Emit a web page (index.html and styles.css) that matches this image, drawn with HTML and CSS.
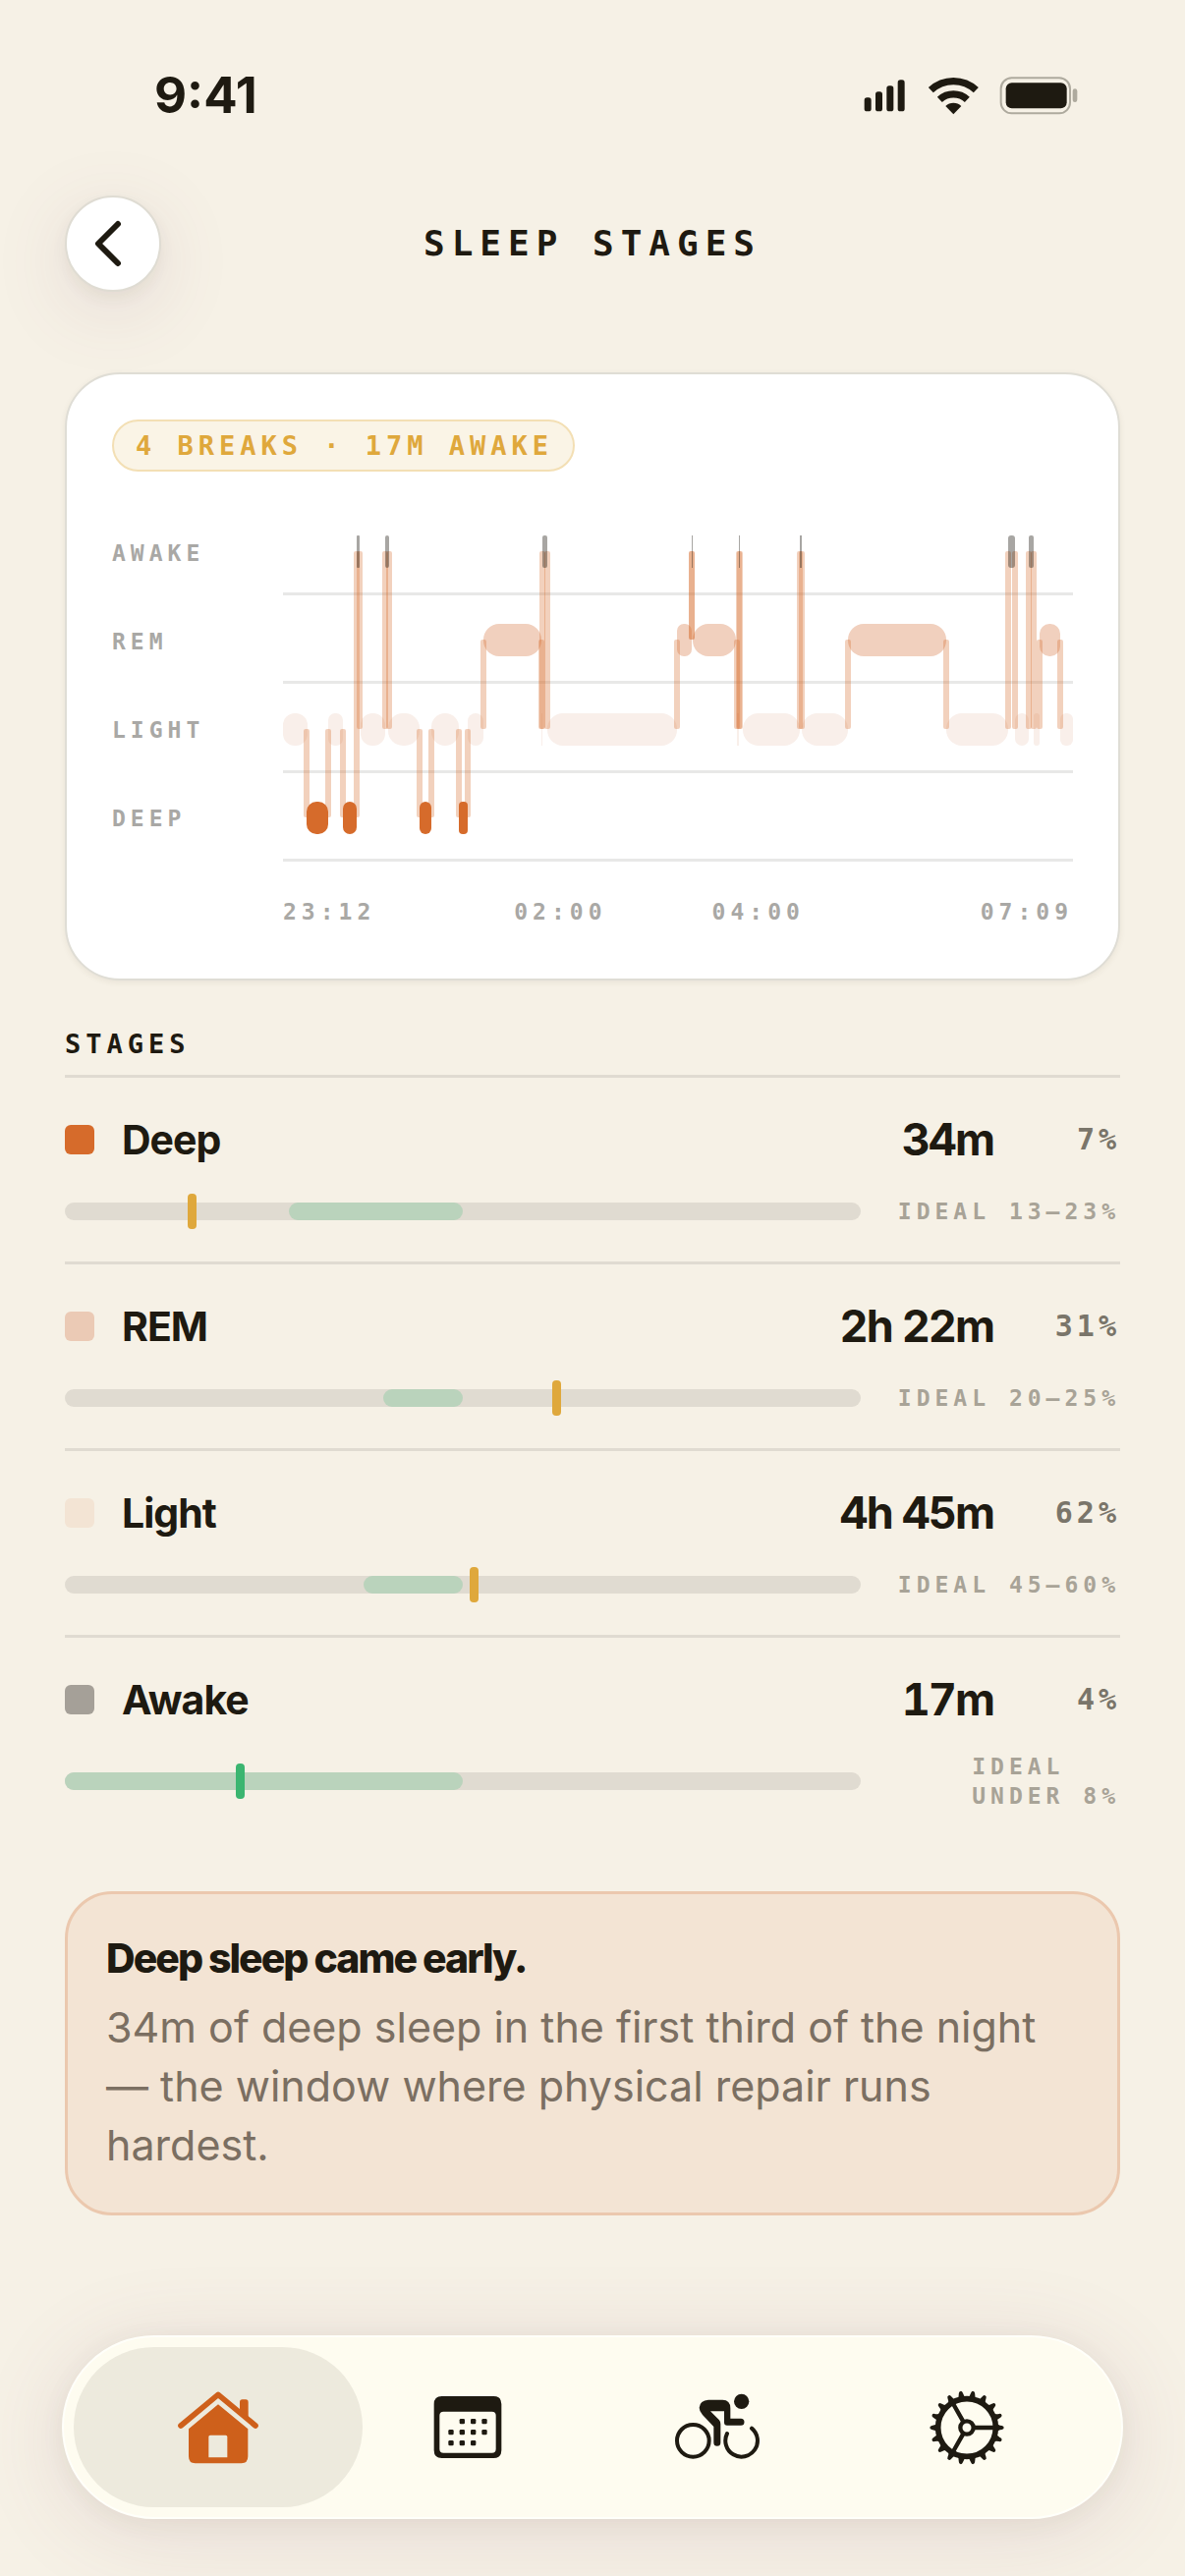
FILE: index.html
```html
<!DOCTYPE html>
<html lang="en">
<head>
<meta charset="utf-8">
<meta name="viewport" content="width=device-width, initial-scale=1">
<title>Sleep Stages</title>
<link rel="stylesheet" href="styles.css">
</head>
<body>
<div class="screen">
  <div class="status">
    <span class="status-time">9:41</span>
    <span class="status-icons">
      <svg width="44" height="40" viewBox="58 50 132 120" aria-hidden="true"><rect x="60" y="117" width="21" height="42" rx="8"/><rect x="94" y="99" width="21" height="60" rx="8"/><rect x="128" y="81" width="21" height="78" rx="8"/><rect x="162" y="63" width="21" height="96" rx="8"/></svg>
      <svg width="54" height="40" viewBox="250 50 162 120" aria-hidden="true"><path class="wave" d="M263 94A101 101 0 0 1 401 94M290 123A62 62 0 0 1 374 123"/><path d="M332 168l-24-25a35 35 0 0 1 48 0z"/></svg>
      <svg width="80" height="40" viewBox="472 50 240 120" aria-hidden="true"><rect class="shell" x="477" y="57" width="211" height="108" rx="33"/><rect x="492" y="72" width="186" height="78" rx="18"/><path class="cap" d="M696 97q0-7 7-7 7 0 7 9v23q0 9-7 9-7 0-7-7z"/></svg>
    </span>
  </div>

  <header class="header">
    <button class="back" type="button" aria-label="Back">
      <svg width="42" height="54" viewBox="0 0 42 54" aria-hidden="true"><path d="M29 7L9 27l20 20"/></svg>
    </button>
    <h1 class="title">SLEEP STAGES</h1>
  </header>

  <main class="content">
    <section class="card">
      <span class="badge">4 BREAKS · 17M AWAKE</span>
      <div class="chart">
        <div class="levels"><span>AWAKE</span><span>REM</span><span>LIGHT</span><span>DEEP</span></div>
        <svg class="plot" viewBox="0 0 804 364" preserveAspectRatio="none" role="img" aria-label="Sleep stages through the night">
          <g class="grid"><rect y="89" width="804" height="3"/><rect y="179" width="804" height="3"/><rect y="270" width="804" height="3"/><rect y="360" width="804" height="3"/></g>
          <g class="light">
            <rect x="0" y="212" width="25" height="33" rx="12"/><rect x="46" y="212" width="15" height="33" rx="7"/><rect x="79" y="212" width="25" height="33" rx="12"/><rect x="107" y="212" width="32" height="33" rx="15"/><rect x="151" y="212" width="28" height="33" rx="14"/><rect x="188" y="212" width="16" height="33" rx="8"/><rect x="269" y="212" width="132" height="33" rx="16"/><rect x="468" y="212" width="58" height="33" rx="16"/><rect x="528" y="212" width="47" height="33" rx="16"/><rect x="675" y="212" width="63" height="33" rx="16"/><rect x="745" y="212" width="14" height="33" rx="7"/><rect x="764" y="212" width="6" height="33" rx="3"/><rect x="791" y="212" width="13" height="33" rx="6"/><rect x="263" y="212" width="1" height="33"/><rect x="462" y="212" width="2" height="33"/>
          </g>
          <g class="rem">
            <rect x="204" y="121" width="59" height="33" rx="16"/><rect x="401" y="121" width="15" height="33" rx="7"/><rect x="417" y="121" width="44" height="33" rx="16"/><rect x="575" y="121" width="100" height="33" rx="16"/><rect x="770" y="121" width="21" height="33" rx="10"/>
          </g>
          <g class="link">
            <rect x="21" y="228" width="6" height="90" rx="2"/><rect x="43" y="228" width="6" height="90" rx="2"/><rect x="58" y="228" width="6" height="90" rx="2"/><rect x="72" y="47" width="6" height="271" rx="2"/><rect x="75" y="47" width="6" height="181" rx="2"/><rect x="101" y="47" width="6" height="181" rx="2"/><rect x="105" y="47" width="6" height="181" rx="2"/><rect x="136" y="228" width="6" height="90" rx="2"/><rect x="148" y="228" width="6" height="90" rx="2"/><rect x="176" y="228" width="6" height="90" rx="2"/><rect x="185" y="228" width="6" height="90" rx="2"/><rect x="201" y="137" width="6" height="91" rx="2"/><rect x="260" y="137" width="6" height="91" rx="2"/><rect x="261" y="47" width="6" height="181" rx="2"/><rect x="266" y="47" width="6" height="181" rx="2"/><rect x="398" y="137" width="6" height="91" rx="2"/><rect x="413" y="47" width="6" height="90" rx="2"/><rect x="413" y="47" width="6" height="90" rx="2"/><rect x="459" y="137" width="6" height="91" rx="2"/><rect x="461" y="47" width="6" height="181" rx="2"/><rect x="462" y="47" width="6" height="181" rx="2"/><rect x="523" y="47" width="6" height="181" rx="2"/><rect x="525" y="47" width="6" height="181" rx="2"/><rect x="572" y="137" width="6" height="91" rx="2"/><rect x="672" y="137" width="6" height="91" rx="2"/><rect x="735" y="47" width="6" height="181" rx="2"/><rect x="742" y="47" width="6" height="181" rx="2"/><rect x="756" y="47" width="6" height="181" rx="2"/><rect x="761" y="47" width="6" height="181" rx="2"/><rect x="767" y="137" width="6" height="91" rx="2"/><rect x="788" y="137" width="6" height="91" rx="2"/>
          </g>
          <g class="awake">
            <rect x="75" y="31" width="3" height="33" rx="1"/><rect x="104" y="31" width="4" height="33" rx="2"/><rect x="264" y="31" width="5" height="33" rx="2"/><rect x="416" y="31" width="1" height="33"/><rect x="464" y="31" width="1" height="33"/><rect x="526" y="31" width="2" height="33"/><rect x="738" y="31" width="7" height="33" rx="3"/><rect x="759" y="31" width="5" height="33" rx="2"/>
          </g>
          <g class="deep">
            <rect x="24" y="302" width="22" height="33" rx="10"/><rect x="61" y="302" width="14" height="33" rx="7"/><rect x="139" y="302" width="12" height="33" rx="6"/><rect x="179" y="302" width="9" height="33" rx="4"/>
          </g>
        </svg>
        <div class="times"><span>23:12</span><span>02:00</span><span>04:00</span><span>07:09</span></div>
      </div>
    </section>

    <section class="stages">
      <h2 class="stages-title">STAGES</h2>
      <div class="stage">
        <div class="stage-head"><i class="swatch swatch-deep"></i><h3>Deep</h3><span class="length">34m</span><span class="share">7%</span></div>
        <div class="stage-range"><div class="track"><i class="ideal-zone" style="left:28.2%;width:21.8%"></i><i class="marker" style="left:16%"></i></div><span class="ideal">IDEAL 13–23%</span></div>
      </div>
      <div class="stage">
        <div class="stage-head"><i class="swatch swatch-rem"></i><h3>REM</h3><span class="length">2h 22m</span><span class="share">31%</span></div>
        <div class="stage-range"><div class="track"><i class="ideal-zone" style="left:40%;width:10%"></i><i class="marker" style="left:61.8%"></i></div><span class="ideal">IDEAL 20–25%</span></div>
      </div>
      <div class="stage">
        <div class="stage-head"><i class="swatch swatch-light"></i><h3>Light</h3><span class="length">4h 45m</span><span class="share">62%</span></div>
        <div class="stage-range"><div class="track"><i class="ideal-zone" style="left:37.5%;width:12.5%"></i><i class="marker" style="left:51.5%"></i></div><span class="ideal">IDEAL 45–60%</span></div>
      </div>
      <div class="stage">
        <div class="stage-head"><i class="swatch swatch-awake"></i><h3>Awake</h3><span class="length">17m</span><span class="share">4%</span></div>
        <div class="stage-range"><div class="track"><i class="ideal-zone" style="left:0%;width:50%"></i><i class="marker marker-good" style="left:22.1%"></i></div><span class="ideal">IDEAL<br>UNDER 8%</span></div>
      </div>
    </section>

    <section class="insight">
      <h2>Deep sleep came early.</h2>
      <p>34m of deep sleep in the first third of the night — the window where physical repair runs hardest.</p>
    </section>
  </main>

  <nav class="tabs">
    <a class="tab tab-active" href="#home" aria-label="Home" aria-current="page">
      <svg width="90" height="90" viewBox="20 16 270 270"><path class="roof" d="M41 145L155 50l114 95"/><path d="M221 100V73q0-8 8-8h10q8 0 8 8v50z"/><path fill-rule="evenodd" d="M155 80l91 75v84q0 21-20 21H85q-20 0-20-21v-84zM131 174q-5 0-5 5v63h57v-63q0-5-5-5z"/></svg>
    </a>
    <a class="tab" href="#calendar" aria-label="Calendar">
      <svg width="90" height="90" viewBox="784 16 270 270"><path fill-rule="evenodd" d="M840 55h158q24 0 24 24v141q0 24-24 24H840q-24 0-24-24V79q0-24 24-24zM845 102q-12 0-12 12v102q0 12 12 12h148q12 0 12-12V114q0-12-12-12z"/><rect x="894" y="124" width="16" height="16" rx="4"/><rect x="928" y="124" width="16" height="16" rx="4"/><rect x="962" y="124" width="16" height="16" rx="4"/><rect x="860" y="157" width="16" height="16" rx="4"/><rect x="894" y="157" width="16" height="16" rx="4"/><rect x="928" y="157" width="16" height="16" rx="4"/><rect x="962" y="157" width="16" height="16" rx="4"/><rect x="860" y="190" width="16" height="16" rx="4"/><rect x="894" y="190" width="16" height="16" rx="4"/><rect x="928" y="190" width="16" height="16" rx="4"/></svg>
    </a>
    <a class="tab" href="#activity" aria-label="Activity">
      <svg width="90" height="90" viewBox="15 16 270 270"><circle cx="224" cy="71" r="23"/><path d="M123 66h43q24 0 24 26v31h32a10 10 0 0 1 0 21h-42q-9 0-9-9v-34h-42l27 27q4 4 4 12v57a10 10 0 0 1-21 0v-49l-34-36q-10-11-10-22 2-23 28-24z"/><g class="wheel"><circle cx="76" cy="191" r="49"/><path d="M180 169A49 49 0 1 0 255 153"/></g></svg>
    </a>
    <a class="tab" href="#settings" aria-label="Settings">
      <svg width="90" height="90" viewBox="-135 -135 270 270"><defs><g id="teeth"><path id="tooth" d="M88-15q8 8 19 9 6 1 6 6t-6 6q-11 1-19 9z"/><use href="#tooth" transform="rotate(20)"/><use href="#tooth" transform="rotate(40)"/></g></defs><use href="#teeth"/><use href="#teeth" transform="rotate(60)"/><use href="#teeth" transform="rotate(120)"/><use href="#teeth" transform="rotate(180)"/><use href="#teeth" transform="rotate(240)"/><use href="#teeth" transform="rotate(300)"/><g class="cog"><circle class="rim" r="88"/><circle r="20"/><path d="M20 0H86M-10-17L-43-75M-10 17L-43 75"/></g></svg>
    </a>
  </nav>
</div>
</body>
</html>
```
FILE: styles.css
```css
:root {
  --paper: #f6f1e6;
  --ink: #1e1a11;
  --rule: #e0dbd1;
  --gold: #dfa83c;
  --mono: "DejaVu Sans Mono", monospace;
  --sans: Inter, sans-serif;
}

* { box-sizing: border-box; }

body {
  margin: 0;
  background: var(--paper);
  color: var(--ink);
  font-family: var(--sans);
}

h1, h2, h3, p { margin: 0; }

svg { display: block; }

.screen {
  display: flex;
  flex-direction: column;
  min-height: 100vh;
  padding-bottom: 58px;
}

/* Status bar */
.status {
  display: flex;
  justify-content: space-between;
  align-items: center;
  height: 60px;
  margin-top: 67px;
  padding: 0 109px 0 157px;
}

.status-time {
  font-size: 51px;
  font-weight: 650;
  line-height: 60px;
}

.status-icons { display: flex; gap: 20px; fill: var(--ink); }
.wave { fill: none; stroke: var(--ink); stroke-width: 22; }
.shell { fill: none; stroke: #aeaa9e; stroke-width: 6; }
.cap { fill: #aeaa9e; }

/* Header */
.header {
  display: grid;
  grid-template-columns: 98px 1fr 98px;
  align-items: center;
  margin: 72px 66px 82px;
}

.back {
  display: flex;
  align-items: center;
  justify-content: center;
  width: 98px;
  height: 98px;
  padding: 0 6px 0 0;
  border: 2px solid #dfdcd3;
  border-radius: 50%;
  background: #fff;
  box-shadow: 0 18px 80px rgba(130, 80, 110, 0.14), 0 6px 16px rgba(60, 60, 20, 0.06);
}

.back path {
  fill: none;
  stroke: var(--ink);
  stroke-width: 6;
  stroke-linecap: round;
  stroke-linejoin: round;
}

.title {
  font-family: var(--mono);
  font-size: 36px;
  font-weight: 700;
  line-height: 48px;
  letter-spacing: 7px;
  text-align: center;
}

.content { margin: 0 66px; }

/* Hypnogram card */
.card {
  padding: 46px 46px 50px;
  border: 2px solid #dfddd5;
  border-radius: 56px;
  background: #fff;
  box-shadow: 0 2px 6px rgba(80, 70, 40, 0.08);
}

.badge {
  display: block;
  width: fit-content;
  padding: 0 20px 0 22px;
  border: 2px solid #f3dfb4;
  border-radius: 27px;
  background: #faf4e6;
  color: var(--gold);
  font-family: var(--mono);
  font-size: 27px;
  font-weight: 700;
  line-height: 49px;
  letter-spacing: 5px;
}

.chart {
  display: grid;
  grid-template-columns: 174px 1fr;
  margin-top: 34px;
  color: #a9a8a5;
  font-family: var(--mono);
  font-size: 23px;
  font-weight: 700;
  letter-spacing: 5px;
}

.levels { display: flex; flex-direction: column; padding-top: 4px; line-height: 90px; }
.plot { width: 100%; height: 364px; }

.grid { fill: #e8e8e7; }
.light { fill: #f9efea; }
.rem { fill: #f1d0be; }
.link { fill: #d66b2b; fill-opacity: 0.31; }
.awake { fill: #1e1a11; fill-opacity: 0.39; }
.deep { fill: #d66b2b; }

.times {
  display: grid;
  grid-column: 2;
  grid-template-columns: 236fr 202fr 274fr auto;
  margin-top: 32px;
  line-height: 36px;
}

/* Stage list */
.stages { margin-top: 45px; }

.stages-title {
  padding-bottom: 11px;
  border-bottom: 3px solid var(--rule);
  font-family: var(--mono);
  font-size: 27px;
  line-height: 40px;
  letter-spacing: 5px;
}

.stage { padding: 36px 0 31px; border-bottom: 3px solid var(--rule); }
.stage:last-child { border-bottom: 0; }

.stage-head { display: flex; align-items: center; height: 54px; }

.stage-head h3 {
  flex: 1;
  margin-left: 28px;
  font-size: 41px;
  font-weight: 700;
  line-height: 54px;
  letter-spacing: -1px;
}

.swatch { width: 30px; height: 30px; border-radius: 6px; }
.swatch-deep { background: #d66b2b; }
.swatch-rem { background: #ebcab5; }
.swatch-light { background: #f3e4d4; }
.swatch-awake { background: #a5a098; }

.length {
  font-size: 45px;
  font-weight: 700;
  font-variant-numeric: tabular-nums;
  line-height: 54px;
  letter-spacing: -2px;
}

.share {
  width: 129px;
  color: #7a756a;
  font-family: var(--mono);
  font-size: 30px;
  font-weight: 700;
  line-height: 54px;
  letter-spacing: 4px;
  text-align: right;
}

.stage-range {
  display: flex;
  align-items: center;
  justify-content: space-between;
  min-height: 40px;
  margin-top: 26px;
}

.track {
  position: relative;
  flex: 0 1 810px;
  height: 18px;
  border-radius: 9px;
  background: #e0dbd1;
}

.ideal-zone {
  position: absolute;
  top: 0;
  height: 18px;
  border-radius: 9px;
  background: #bad3bc;
}

.marker {
  position: absolute;
  top: -9px;
  width: 9px;
  height: 36px;
  margin-left: -5px;
  border-radius: 4px;
  background: var(--gold);
}

.marker-good { background: #3bb570; }

.ideal {
  color: #a8a397;
  font-family: var(--mono);
  font-size: 23px;
  font-weight: 700;
  line-height: 30px;
  letter-spacing: 5px;
  white-space: nowrap;
}

/* Insight */
.insight {
  margin: 51px 0 60px;
  padding: 39px;
  border: 3px solid #ebc8ae;
  border-radius: 48px;
  background: #f3e4d4;
}

.insight h2 {
  font-size: 41px;
  font-weight: 800;
  line-height: 52px;
  letter-spacing: -2px;
}

.insight p {
  margin-top: 14px;
  color: #7b6f62;
  font-size: 43px;
  line-height: 60px;
}

/* Tab bar */
.tabs {
  display: flex;
  margin: auto 63px 0;
  padding: 10px;
  border: 2px solid #fffffa;
  border-radius: 94px;
  background: #fefcf0;
  box-shadow: 0 12px 90px rgba(130, 70, 100, 0.14), 0 4px 24px rgba(60, 80, 30, 0.06);
}

.tab {
  display: flex;
  flex: 1;
  align-items: center;
  justify-content: center;
  height: 163px;
  border-radius: 82px;
  color: var(--ink);
  fill: currentColor;
}

/* Neighbouring tabs share the space between their icons */
.tab + .tab { margin-left: -40px; }

.tab-active { background: #edeadd; color: #ce601b; }

.roof {
  fill: none;
  stroke: currentColor;
  stroke-width: 17;
  stroke-linecap: round;
  stroke-linejoin: round;
}

.wheel { fill: none; stroke: currentColor; stroke-width: 12; stroke-linecap: round; }
.cog { fill: none; stroke: currentColor; stroke-width: 13; }
.rim { stroke-width: 17; }
```
